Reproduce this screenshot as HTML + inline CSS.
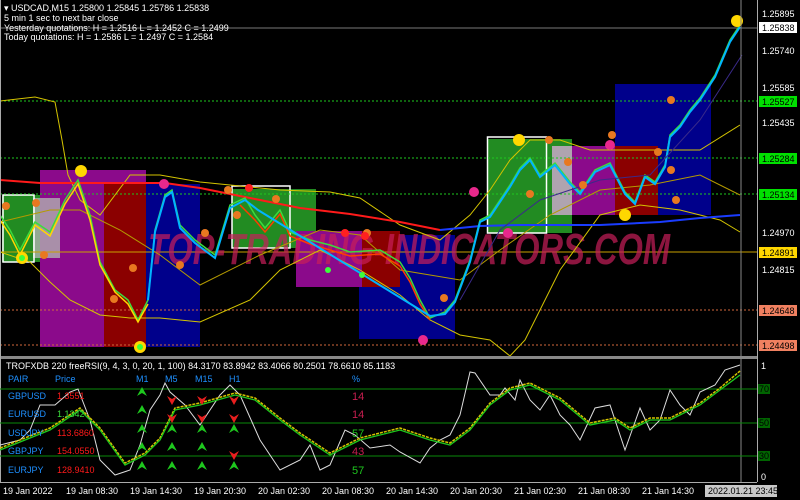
<!DOCTYPE html>
<html><head><meta charset="utf-8"><style>
html,body{margin:0;padding:0;background:#000;width:800px;height:500px;overflow:hidden}
svg{display:block}
text{font-family:"Liberation Sans",sans-serif}
</style></head><body>
<svg width="800" height="500" viewBox="0 0 800 500" xmlns="http://www.w3.org/2000/svg">
<rect width="800" height="500" fill="#000"/>
<g>
<rect x="40" y="170" width="106" height="177" fill="#8b0a8b"/>
<rect x="104" y="184" width="42" height="163" fill="#8b0000"/>
<rect x="146" y="184" width="54" height="163" fill="#00008b"/>
<rect x="2" y="195" width="38" height="67" fill="#228b22"/>
<rect x="33" y="198" width="27" height="60" fill="#b0b0b0" opacity="0.8"/>
<rect x="232" y="189" width="84" height="59" fill="#228b22"/>
<rect x="296" y="231" width="104" height="56" fill="#8b0a8b"/>
<rect x="362" y="231" width="38" height="56" fill="#8b0000"/>
<rect x="400" y="235" width="55" height="52" fill="#00008b"/>
<rect x="359" y="287" width="96" height="52" fill="#00008b"/>
<rect x="615" y="84" width="96" height="131" fill="#00008b"/>
<rect x="487" y="139" width="85" height="94" fill="#228b22"/>
<rect x="572" y="146" width="43" height="69" fill="#8b0a8b"/>
<rect x="552" y="146" width="20" height="69" fill="#c8a8c8" opacity="0.85"/>
<rect x="615" y="146" width="43" height="69" fill="#8b0000"/>
<rect x="3" y="195" width="31" height="67" fill="none" stroke="#fff" stroke-width="1.5"/>
<rect x="232" y="186" width="58" height="62" fill="none" stroke="#fff" stroke-width="1.5"/>
<rect x="487.5" y="137" width="59" height="96" fill="none" stroke="#fff" stroke-width="1.5"/>
</g>
<g stroke-dasharray="2,2" stroke-width="1">
<line x1="0" y1="101" x2="757" y2="101" stroke="#1ec81e"/>
<line x1="0" y1="158" x2="757" y2="158" stroke="#1ec81e"/>
<line x1="0" y1="194" x2="757" y2="194" stroke="#1ec81e"/>
<line x1="0" y1="310" x2="757" y2="310" stroke="#d2693c"/>
<line x1="0" y1="345" x2="757" y2="345" stroke="#d2693c"/>
</g>
<line x1="0" y1="252" x2="757" y2="252" stroke="#c8a000" stroke-width="1"/>
<line x1="0" y1="28" x2="757" y2="28" stroke="#777" stroke-width="1"/>
<text x="148" y="264" font-size="44" font-weight="bold" font-style="italic" fill="#c81e5a" opacity="0.7" textLength="522" lengthAdjust="spacingAndGlyphs">TOP-TRADING-INDICATORS.COM</text>
<g fill="none" stroke="#d4c400" stroke-width="1">
<polyline points="0,101 35,97 55,102 62,140 68,175 80,200 100,215 130,175 160,175 200,182 280,190 330,192 360,198 400,225 440,240 470,215 490,190 510,160 530,140 560,140 590,150 650,150 700,150 740,125"/>
<polyline points="0,252 30,262 50,282 70,300 100,315 130,318 160,318 200,322 250,300 280,270 320,250 360,270 400,295 430,320 460,335 490,340 510,356 525,340 560,270 600,215 640,205 680,210 720,220 740,232"/>
<polyline points="0,222 50,210 80,210 120,230 160,255 200,285 260,255 320,230 360,235 400,270 460,280 500,250 550,215 600,190 650,185 700,175 740,195" stroke="#b49a00"/>
</g>
<polyline fill="none" stroke="#ff1a1a" stroke-width="2" points="0,180 40,183 100,183 165,183 200,188 250,198 300,208 350,214 400,222 440,230"/>
<polyline fill="none" stroke="#1a3cff" stroke-width="2" points="440,230 480,226 520,225 600,225 660,222 700,218 740,215"/>
<g stroke="#3cdc3c" stroke-width="1.5" fill="none">
<polyline points="0,215 10,230 20,250 35,222 50,232 65,200 78,180 90,215 100,262 115,290 128,300 138,320 148,300 155,230 165,195 172,190 180,225 195,240 215,255 230,205 245,198 255,215 265,228 280,210 290,232 310,240 330,245 350,252 380,250 400,262 410,278 420,300 430,318 445,312 455,300 470,260 480,220 490,215 500,200 510,185 520,168 530,158 540,175 555,163 570,182 580,192 595,170 610,163 625,192 635,202 645,175 655,182 665,165 670,135 680,125 690,110 700,98 715,75 730,40 740,25"/>
</g>
<polyline fill="none" stroke="#ffd700" stroke-width="1.5" points="0,220 10,235 20,255 35,225 50,236 65,204 78,184 90,220 100,265 115,292 128,304 138,322 148,304"/>
<polyline fill="none" stroke="#ff3c00" stroke-width="1.5" points="240,205 255,220 265,232 280,214 290,236 310,244 330,250 350,256 380,254 400,266 410,282 420,304 430,320"/>
<polyline fill="none" stroke="#00b4ff" stroke-width="2" points="148,300 155,232 165,197 172,192 180,228 195,243 215,258 230,208 245,200 258,210 430,316 445,314 455,302 470,262 480,222 490,217 500,202 510,187 520,170 530,160 540,177 555,165 570,184 580,194 595,172 610,165 625,194 635,204 645,177 655,184 665,167 670,137 680,127 690,112 700,100 715,77 730,42 740,27"/>
<polyline fill="none" stroke="#3a2a8a" stroke-width="1" points="460,300 500,230 540,200 600,180 650,175 700,120 742,55"/>
<g fill="#e87820">
<circle cx="6" cy="206" r="4"/><circle cx="36" cy="203" r="4"/><circle cx="44" cy="255" r="4"/><circle cx="114" cy="299" r="4"/><circle cx="133" cy="268" r="4"/><circle cx="180" cy="265" r="4"/><circle cx="205" cy="233" r="4"/><circle cx="228" cy="190" r="4"/><circle cx="237" cy="215" r="4"/><circle cx="276" cy="199" r="4"/><circle cx="367" cy="233" r="4"/><circle cx="444" cy="298" r="4"/><circle cx="530" cy="194" r="4"/><circle cx="549" cy="140" r="4"/><circle cx="568" cy="162" r="4"/><circle cx="583" cy="185" r="4"/><circle cx="658" cy="152" r="4"/><circle cx="671" cy="170" r="4"/><circle cx="676" cy="200" r="4"/><circle cx="671" cy="100" r="4"/><circle cx="612" cy="135" r="4"/>
</g>
<g fill="#ffd700"><circle cx="81" cy="171" r="6"/><circle cx="22" cy="258" r="6"/><circle cx="140" cy="347" r="6"/><circle cx="519" cy="140" r="6"/><circle cx="625" cy="215" r="6"/><circle cx="737" cy="21" r="6"/></g>
<g fill="#e8288c"><circle cx="164" cy="184" r="5"/><circle cx="474" cy="192" r="5"/><circle cx="508" cy="233" r="5"/><circle cx="610" cy="145" r="5"/><circle cx="423" cy="340" r="5"/></g>
<g fill="#ff2020"><circle cx="249" cy="188" r="4"/><circle cx="345" cy="233" r="4"/><circle cx="365" cy="236" r="4"/></g>
<g fill="#3cff3c"><circle cx="328" cy="270" r="3"/><circle cx="362" cy="275" r="3"/><circle cx="140" cy="347" r="3"/><circle cx="22" cy="258" r="3"/></g>
<g font-size="9" fill="#fff">
<text x="4" y="11">▾ USDCAD,M15  1.25800 1.25845 1.25786 1.25838</text>
<text x="4" y="21">5 min 1 sec to next bar close</text>
<text x="4" y="31">Yesterday quotations:  H = 1.2516  L = 1.2452  C = 1.2499</text>
<text x="4" y="40">Today quotations:         H = 1.2586  L = 1.2497  C = 1.2584</text>
</g>
<line x1="741" y1="0" x2="741" y2="482" stroke="#888" stroke-width="1"/>
<line x1="757.5" y1="0" x2="757.5" y2="482" stroke="#aaa" stroke-width="1"/>
<g font-size="9" fill="#fff">
<text x="762" y="17">1.25895</text><text x="762" y="54">1.25740</text><text x="762" y="91">1.25585</text><text x="762" y="126">1.25435</text><text x="762" y="236">1.24970</text><text x="762" y="273">1.24815</text>
</g>
<g font-size="9">
<rect x="759" y="22" width="38" height="11" fill="#fff"/><text x="762" y="31" fill="#000">1.25838</text>
<rect x="759" y="96" width="38" height="11" fill="#00e000"/><text x="762" y="105" fill="#000">1.25527</text>
<rect x="759" y="153" width="38" height="11" fill="#00e000"/><text x="762" y="162" fill="#000">1.25284</text>
<rect x="759" y="189" width="38" height="11" fill="#00e000"/><text x="762" y="198" fill="#000">1.25134</text>
<rect x="759" y="247" width="38" height="11" fill="#ffd700"/><text x="762" y="256" fill="#000">1.24891</text>
<rect x="759" y="305" width="38" height="11" fill="#f08060"/><text x="762" y="314" fill="#000">1.24648</text>
<rect x="759" y="340" width="38" height="11" fill="#f08060"/><text x="762" y="349" fill="#000">1.24498</text>
</g>
<rect x="0" y="356" width="757" height="3" fill="#888"/>
<line x1="0.5" y1="0" x2="0.5" y2="482" stroke="#aaa"/>
<line x1="0" y1="482.5" x2="757" y2="482.5" stroke="#aaa"/>
<g stroke="#0a8a0a" stroke-width="1">
<line x1="0" y1="389" x2="757" y2="389"/><line x1="0" y1="423" x2="757" y2="423"/><line x1="0" y1="456" x2="757" y2="456"/>
</g>
<polyline fill="none" stroke="#ddd" stroke-width="1" points="0,445 20,440 30,430 40,405 55,405 70,392 78,389 90,420 100,460 115,475 130,470 140,445 150,410 160,395 165,383 170,392 185,405 200,425 220,395 230,385 240,395 260,440 280,470 300,460 310,445 320,470 330,465 345,430 355,435 370,448 390,445 400,452 420,463 430,448 440,440 450,435 460,415 470,372 475,373 490,395 500,395 505,388 515,400 520,380 530,400 540,410 550,395 560,415 570,425 580,440 595,408 610,405 625,450 640,408 650,430 660,420 670,390 680,405 690,415 700,392 715,385 725,370 740,365"/>
<polyline fill="none" stroke="#d4c400" stroke-width="1.5" stroke-dasharray="3,1" points="0,448 50,428 80,408 100,428 125,463 145,453 160,438 175,408 200,403 235,393 255,398 280,418 300,433 330,453 360,438 400,428 430,438 450,443 470,428 490,403 510,388 530,383 560,398 590,423 615,418 630,428 650,418 670,418 700,403 720,388 740,371"/>
<polyline fill="none" stroke="#1ec81e" stroke-width="1.3" points="0,450 50,430 80,410 100,430 125,465 145,455 160,440 175,410 200,405 235,395 255,400 280,420 300,435 330,455 360,440 400,430 430,440 450,445 470,430 490,405 510,390 530,385 560,400 590,425 615,420 630,430 650,420 670,420 700,405 720,390 740,375"/>
<g font-size="9" fill="#fff"><text x="6" y="369">TROFXDB 220  freeRSI(9, 4, 3, 0, 20, 1, 100) 84.3170 83.8942 83.4066 80.2501  78.6610 85.1183</text></g>
<g font-size="9" fill="#1e90ff">
<text x="8" y="382">PAIR</text><text x="55" y="382">Price</text><text x="136" y="382">M1</text><text x="165" y="382">M5</text><text x="195" y="382">M15</text><text x="229" y="382">H1</text><text x="352" y="382">%</text>
<text x="8" y="399">GBPUSD</text><text x="8" y="417">EURUSD</text><text x="8" y="436">USDJPY</text><text x="8" y="454">GBPJPY</text><text x="8" y="473">EURJPY</text>
</g>
<g font-size="9" fill="#ff1a1a"><text x="57" y="399">1.3551</text><text x="57" y="436">113.6860</text><text x="57" y="454">154.0550</text><text x="57" y="473">128.9410</text></g>
<text x="57" y="417" font-size="9" fill="#3cdc3c">1.1342</text>
<g font-size="11"><text x="352" y="400" fill="#c81e50">14</text><text x="352" y="418" fill="#c81e50">14</text><text x="352" y="437" fill="#1ec81e">57</text><text x="352" y="455" fill="#c81e50">43</text><text x="352" y="474" fill="#1ec81e">57</text></g>
<g>
<g fill="#1ec81e">
<path d="M142,387 l5,9 l-5,-3 l-5,3z"/><path d="M142,405 l5,9 l-5,-3 l-5,3z"/><path d="M142,424 l5,9 l-5,-3 l-5,3z"/><path d="M142,442 l5,9 l-5,-3 l-5,3z"/><path d="M142,461 l5,9 l-5,-3 l-5,3z"/>
<path d="M172,424 l5,9 l-5,-3 l-5,3z"/><path d="M172,442 l5,9 l-5,-3 l-5,3z"/><path d="M172,461 l5,9 l-5,-3 l-5,3z"/>
<path d="M202,424 l5,9 l-5,-3 l-5,3z"/><path d="M202,442 l5,9 l-5,-3 l-5,3z"/><path d="M202,461 l5,9 l-5,-3 l-5,3z"/>
<path d="M234,424 l5,9 l-5,-3 l-5,3z"/><path d="M234,461 l5,9 l-5,-3 l-5,3z"/>
</g>
<g fill="#e81e1e">
<path d="M172,405 l5,-9 l-5,3 l-5,-3z"/><path d="M172,423 l5,-9 l-5,3 l-5,-3z"/>
<path d="M202,405 l5,-9 l-5,3 l-5,-3z"/><path d="M202,423 l5,-9 l-5,3 l-5,-3z"/>
<path d="M234,405 l5,-9 l-5,3 l-5,-3z"/><path d="M234,423 l5,-9 l-5,3 l-5,-3z"/><path d="M234,460 l5,-9 l-5,3 l-5,-3z"/>
</g>
</g>
<g font-size="9">
<text x="761" y="369" fill="#fff">1</text><text x="761" y="480" fill="#fff">0</text>
<rect x="758" y="384" width="12" height="10" fill="#006400"/><text x="759" y="392" fill="#000">70</text>
<rect x="758" y="418" width="12" height="10" fill="#006400"/><text x="759" y="426" fill="#000">50</text>
<rect x="758" y="451" width="12" height="10" fill="#006400"/><text x="759" y="459" fill="#000">30</text>
</g>
<g font-size="9" fill="#fff">
<text x="3" y="494">19 Jan 2022</text><text x="66" y="494">19 Jan 08:30</text><text x="130" y="494">19 Jan 14:30</text><text x="194" y="494">19 Jan 20:30</text><text x="258" y="494">20 Jan 02:30</text><text x="322" y="494">20 Jan 08:30</text><text x="386" y="494">20 Jan 14:30</text><text x="450" y="494">20 Jan 20:30</text><text x="514" y="494">21 Jan 02:30</text><text x="578" y="494">21 Jan 08:30</text><text x="642" y="494">21 Jan 14:30</text>
</g>
<rect x="705" y="485" width="72" height="12" fill="#c8c8c8"/>
<text x="708" y="494" font-size="9" fill="#000">2022.01.21 23:45</text>
</svg>
</body></html>
